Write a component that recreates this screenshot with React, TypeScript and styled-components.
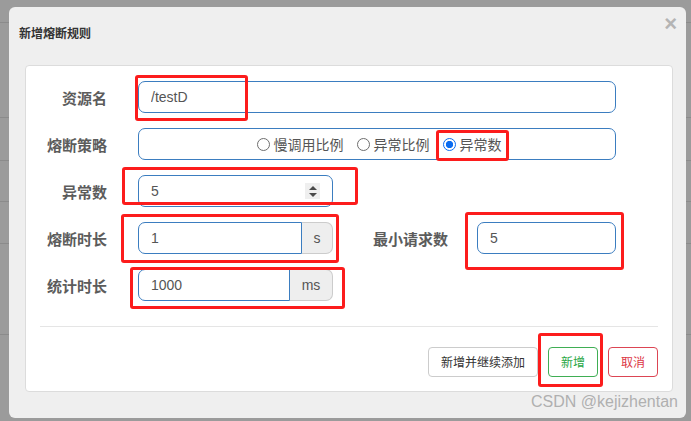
import React from "react";
import styled, { createGlobalStyle } from "styled-components";

const GlobalStyle = createGlobalStyle`
  html, body {
    margin: 0;
    padding: 0;
  }
  body {
    font-family: "Liberation Sans", "Noto Sans CJK SC", sans-serif;
  }
  * {
    box-sizing: border-box;
  }
`;

const cjk = `"Noto Sans CJK SC", "Liberation Sans", sans-serif`;

const marks = [
  { x: 135, y: 75, w: 113, h: 46 },
  { x: 436, y: 130, w: 73, h: 31 },
  { x: 122, y: 167, w: 236, h: 38 },
  { x: 121, y: 214, w: 218, h: 49 },
  { x: 130, y: 267, w: 215, h: 42 },
  { x: 465, y: 212, w: 159, h: 58 },
  { x: 538, y: 333, w: 65, h: 54 },
];

const strategies = [
  { id: "slow", text: "慢调用比例" },
  { id: "ratio", text: "异常比例" },
  { id: "count", text: "异常数" },
];

export default function App() {
  return (
    <Page>
      <GlobalStyle />
      <Modal>
        <Header>
          <Title>新增熔断规则</Title>
          <Close>×</Close>
        </Header>
        <Panel>
          <Form>
            <Row>
              <Label>资源名</Label>
              <TextInput $w={478} defaultValue="/testD" />
            </Row>
            <Row>
              <Label>熔断策略</Label>
              <RadioBox>
                {strategies.map((s) => (
                  <RadioItem key={s.id}>
                    <RadioDot $checked={s.id === "count"} />
                    {s.text}
                  </RadioItem>
                ))}
              </RadioBox>
            </Row>
            <Row>
              <Label>异常数</Label>
              <NumberField>
                <BareInput defaultValue="5" />
                <Spin>
                  <svg width="8" height="11" viewBox="0 0 8 11">
                    <path d="M4 0 L8 4 L0 4 Z" fill="#4a4a4a" />
                    <path d="M0 7 L8 7 L4 11 Z" fill="#4a4a4a" />
                  </svg>
                </Spin>
              </NumberField>
            </Row>
            <Row>
              <Label>熔断时长</Label>
              <Group>
                <GroupInput defaultValue="1" />
                <Addon $w={31}>s</Addon>
              </Group>
              <SideLabel>最小请求数</SideLabel>
              <TextInput $w={139} defaultValue="5" />
            </Row>
            <Row>
              <Label>统计时长</Label>
              <Group>
                <GroupInput defaultValue="1000" />
                <Addon $w={43}>ms</Addon>
              </Group>
            </Row>
          </Form>
          <Divider />
          <Footer>
            <Button $tone="default">新增并继续添加</Button>
            <Button $tone="success">新增</Button>
            <Button $tone="danger">取消</Button>
          </Footer>
        </Panel>
      </Modal>
      {marks.map((m, i) => (
        <Mark key={i} $x={m.x} $y={m.y} $w={m.w} $h={m.h} />
      ))}
      <Watermark>CSDN @kejizhentan</Watermark>
    </Page>
  );
}

const line = (y: number) =>
  `linear-gradient(#8b8b8b, #8b8b8b) 0 ${y}px / 100% 1px no-repeat`;

const Page = styled.div`
  position: relative;
  width: 691px;
  height: 421px;
  overflow: hidden;
  padding: 7px 5px 3px 9px;
  background: ${[22, 117, 160, 201, 243, 334].map(line).join(", ")}, #9b9b9b;
`;

const Modal = styled.div`
  width: 677px;
  height: 411px;
  background: #efefef;
  border-radius: 6px;
  padding: 0 13px 0 16px;
`;

const Header = styled.div`
  height: 52px;
  display: flex;
  align-items: center;
  justify-content: space-between;
  margin-left: -6px;
  margin-right: -4px;
`;

const Title = styled.h4`
  margin: 0;
  font-family: ${cjk};
  font-size: 12px;
  font-weight: 700;
  color: #333;
  line-height: 1;
`;

const Close = styled.span`
  align-self: flex-start;
  margin-top: 6px;
  font-family: "Liberation Sans", sans-serif;
  font-size: 22px;
  font-weight: 700;
  line-height: 1;
  color: #b4b4b4;
`;

const Panel = styled.div`
  margin-top: 6px;
  height: 327px;
  background: #fff;
  border: 1px solid #dcdcdc;
  border-radius: 4px;
  padding: 15px 14px 0;
`;

const Form = styled.div`
  display: flex;
  flex-direction: column;
  gap: 15px;
`;

const Row = styled.div`
  display: flex;
  align-items: center;
  height: 32px;
`;

const Label = styled.label`
  width: 67px;
  margin-right: 31px;
  text-align: right;
  font-family: ${cjk};
  font-size: 15px;
  font-weight: 700;
  color: #5c5c5c;
  line-height: 1;
  white-space: nowrap;
`;

const SideLabel = styled(Label)`
  width: 115px;
  margin-right: 29px;
`;

const fieldBorder = "#3b7dc0";

const TextInput = styled.input<{ $w: number }>`
  width: ${(p) => p.$w}px;
  height: 32px;
  padding: 0 12px;
  border: 1px solid ${fieldBorder};
  border-radius: 7px;
  font-family: "Liberation Sans", sans-serif;
  font-size: 14px;
  color: #555;
  outline: none;
  background: #fff;
`;

const RadioBox = styled.div`
  width: 478px;
  height: 32px;
  border: 1px solid ${fieldBorder};
  border-radius: 7px;
  display: flex;
  align-items: center;
  justify-content: center;
  gap: 13px;
  padding-left: 4px;
`;

const RadioItem = styled.span`
  display: inline-flex;
  align-items: center;
  gap: 4px;
  font-family: ${cjk};
  font-size: 14px;
  color: #555;
  line-height: 1;
`;

const RadioDot = styled.span<{ $checked: boolean }>`
  width: 13px;
  height: 13px;
  border-radius: 50%;
  border: ${(p) => (p.$checked ? "1.5px solid #0b6cf0" : "1px solid #6e6e6e")};
  background: ${(p) =>
    p.$checked ? "radial-gradient(circle, #0b6cf0 0 3.4px, #fff 3.9px)" : "#fff"};
`;

const NumberField = styled.div`
  width: 195px;
  height: 32px;
  border: 1px solid ${fieldBorder};
  border-radius: 7px;
  display: flex;
  align-items: center;
  padding: 0 12px;
`;

const BareInput = styled.input`
  flex: 1;
  min-width: 0;
  border: none;
  outline: none;
  padding: 0;
  font-family: "Liberation Sans", sans-serif;
  font-size: 14px;
  color: #555;
`;

const Spin = styled.span`
  width: 15px;
  height: 16px;
  background: #efefef;
  display: flex;
  align-items: center;
  justify-content: center;
`;

const Group = styled.div`
  width: 195px;
  height: 32px;
  display: flex;
`;

const GroupInput = styled.input`
  flex: 1;
  min-width: 0;
  height: 32px;
  padding: 0 12px;
  border: 1px solid ${fieldBorder};
  border-radius: 7px 0 0 7px;
  font-family: "Liberation Sans", sans-serif;
  font-size: 14px;
  color: #555;
  outline: none;
`;

const Addon = styled.span<{ $w: number }>`
  width: ${(p) => p.$w}px;
  height: 32px;
  display: flex;
  align-items: center;
  justify-content: center;
  background: #eee;
  border: 1px solid #ccc;
  border-left: none;
  border-radius: 0 7px 7px 0;
  font-family: "Liberation Sans", sans-serif;
  font-size: 14px;
  color: #555;
`;

const Divider = styled.div`
  height: 1px;
  background: #e5e5e5;
  margin-top: 25px;
`;

const tones = {
  default: { border: "#cccccc", color: "#333" },
  success: { border: "#3fae54", color: "#28a745" },
  danger: { border: "#dc4553", color: "#dc3545" },
};

const Footer = styled.div`
  display: flex;
  justify-content: flex-end;
  gap: 10px;
  margin-top: 20px;
`;

const Button = styled.button<{ $tone: keyof typeof tones }>`
  height: 30px;
  padding: 0 12px;
  min-width: 50px;
  background: #fff;
  border: 1px solid ${(p) => tones[p.$tone].border};
  border-radius: 4px;
  color: ${(p) => tones[p.$tone].color};
  font-family: ${cjk};
  font-size: 12px;
  line-height: 1;
`;

const Mark = styled.div<{ $x: number; $y: number; $w: number; $h: number }>`
  position: absolute;
  left: ${(p) => p.$x}px;
  top: ${(p) => p.$y}px;
  width: ${(p) => p.$w}px;
  height: ${(p) => p.$h}px;
  border: 3px solid #fc1c1c;
  border-radius: 3px;
  pointer-events: none;
`;

const Watermark = styled.div`
  position: absolute;
  left: 531px;
  top: 393px;
  font-family: "Liberation Sans", sans-serif;
  font-size: 16px;
  line-height: 18px;
  color: #b0b0b0;
  white-space: nowrap;
`;
